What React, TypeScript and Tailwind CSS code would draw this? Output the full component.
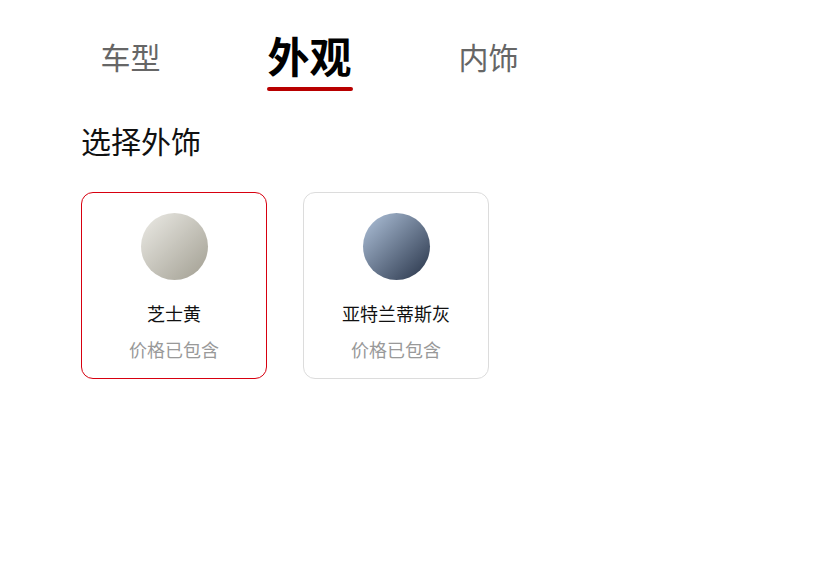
import React, { useState } from "react";

const tabs = ["车型", "外观", "内饰"];

const colors = [
  { name: "芝士黄", from: "#ecebe6", to: "#a19e91" },
  { name: "亚特兰蒂斯灰", from: "#b1c4dc", to: "#263247" },
];

export default function App() {
  const [tab, setTab] = useState(1);
  const [picked, setPicked] = useState(0);

  return (
    <div
      className="w-[839px] h-[564px] bg-white"
      style={{ fontFamily: '"Noto Sans CJK SC", "Noto Sans", sans-serif' }}
    >
      {/* tabs */}
      <div className="flex pl-[41px] pt-[28px] h-[92px]">
        {tabs.map((t, i) => (
          <div
            key={t}
            onClick={() => setTab(i)}
            className="w-[179px] flex flex-col items-center cursor-pointer"
          >
            {i === tab ? (
              <>
                <span className="text-[42px] leading-[54px] font-bold text-black">{t}</span>
                <span className="mt-[5px] w-[86px] h-[4px] rounded-full bg-[#b80000]" />
              </>
            ) : (
              <span className="mt-[8px] text-[30px] leading-[40px] text-[#666]">{t}</span>
            )}
          </div>
        ))}
      </div>

      <div className="pl-[81px]">
        <h2 className="mt-[28px] text-[30px] leading-[40px] text-[#111]">选择外饰</h2>

        <div className="flex gap-[36px] mt-[32px]">
          {colors.map((c, i) => (
            <div
              key={c.name}
              onClick={() => setPicked(i)}
              className={`w-[186px] h-[187px] rounded-[12px] border flex flex-col items-center cursor-pointer ${
                picked === i ? "border-[#d7000f]" : "border-[#dcdcdc]"
              }`}
            >
              <div
                className="mt-[20px] w-[67px] h-[67px] rounded-full"
                style={{ background: `linear-gradient(135deg, ${c.from}, ${c.to})` }}
              />
              <div className="mt-[21px] text-[18px] leading-[24px] text-[#111]">{c.name}</div>
              <div className="mt-[12px] text-[18px] leading-[24px] text-[#999]">价格已包含</div>
            </div>
          ))}
        </div>
      </div>
    </div>
  );
}
